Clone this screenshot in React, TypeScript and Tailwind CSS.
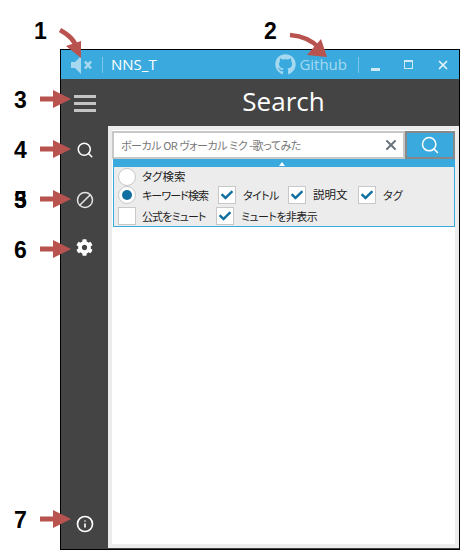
import { Search, Ban, Info, X } from "lucide-react"
import { FaGithub, FaCheck, FaCog } from "react-icons/fa"

const jp = "font-['Noto_Sans_CJK_JP','Noto_Sans',sans-serif] [font-feature-settings:'palt']"
const labelText = "whitespace-nowrap leading-none text-[#222]"

// Red annotation arrow pointing right
function Arrow({ className }: { className: string }) {
  return (
    <svg className={`absolute ${className}`} width="32" height="20" viewBox="0 0 32 20">
      <path d="M0 7.5H13V1L31 10L13 19V12.5H0Z" fill="#b9534f" />
    </svg>
  )
}

function Label({ className, children }: { className: string; children: string }) {
  return (
    <span className={`absolute text-[23px] leading-none font-bold text-black font-['Liberation_Sans',sans-serif] ${className}`}>
      {children}
    </span>
  )
}

function Check({ label, className = "", textClass }: { label: string; className?: string; textClass: string }) {
  return (
    <div className={`flex items-center ${className}`}>
      <div className="flex h-[18px] w-[18px] items-center justify-center border border-[#c8c8c8] bg-white">
        <FaCheck className="h-[12px] w-[12px] text-[#0f6f9f]" />
      </div>
      <span className={`ml-[7px] ${textClass} ${labelText}`}>{label}</span>
    </div>
  )
}

function Radio({ checked = false }: { checked?: boolean }) {
  return (
    <div className="flex h-[18px] w-[18px] items-center justify-center rounded-full border border-[#c8c8c8] bg-white">
      {checked && <div className="h-[10px] w-[10px] rounded-full bg-[#0f6f9f]" />}
    </div>
  )
}

export default function App() {
  return (
    <div className={`relative h-[550px] w-[461px] overflow-hidden bg-white pl-[60px] pt-[49px] ${jp}`}>
      <div className="flex h-[501px] w-[400px] flex-col border border-black bg-[#444444]">
        {/* タイトルバー */}
        <div className="flex h-[29px] shrink-0 items-center bg-[#3aaade] text-white">
          <svg className="ml-[10px] shrink-0" width="21" height="18" viewBox="0 0 21 18">
            <path d="M0 6H4L10 0V18L4 12H0Z" fill="#a6d9f0" />
            <path d="M14 5.5L20 12.5M20 5.5L14 12.5" stroke="#a6d9f0" strokeWidth="2.6" />
          </svg>
          <div className="ml-[10px] h-[16px] w-px bg-[#7cc6e8]" />
          <span className="ml-[8px] text-[15px] leading-none font-['Open_Sans',sans-serif]">NNS_T</span>
          <FaGithub className="ml-auto h-[21px] w-[21px] text-[#a6d9f0]" />
          <span className="ml-[3px] text-[15px] leading-none text-[#a6d9f0] font-['Open_Sans',sans-serif]">Github</span>
          <div className="ml-[11px] h-[16px] w-px bg-[#7cc6e8]" />
          <div className="ml-[12px] mt-[9px] h-[3px] w-[9px] bg-[#cfeaf7]" />
          <div className="ml-[24px] h-[9px] w-[9px] border border-t-2 border-[#cfeaf7]" />
          <X className="ml-[23px] mr-[9px] h-[14px] w-[14px] text-[#e2f3fb]" strokeWidth={3} />
        </div>

        <div className="flex min-h-0 flex-1">
          {/* サイドバー */}
          <div className="flex w-[47px] shrink-0 flex-col items-center pt-[16px] pb-[16px] text-white">
            <div className="flex w-[22px] flex-col gap-[4px]">
              <div className="h-[3px] bg-[#c4c4c4]" />
              <div className="h-[3px] bg-[#c4c4c4]" />
              <div className="h-[3px] bg-[#c4c4c4]" />
            </div>
            <Search className="mt-[29px] h-[18px] w-[18px]" strokeWidth={2} />
            <Ban className="mt-[32px] h-[18px] w-[18px] -scale-x-100 text-[#e4e4e4]" strokeWidth={2} />
            <FaCog className="mt-[30px] h-[17px] w-[17px]" />
            <Info className="mt-auto h-[18px] w-[18px]" strokeWidth={2.2} />
          </div>

          {/* メイン */}
          <div className="flex min-w-0 flex-1 flex-col pb-[1px]">
            <div className="flex h-[47px] shrink-0 items-center justify-center pb-[4px] text-[26px] leading-none text-white font-['Open_Sans',sans-serif]">
              Search
            </div>
            <div className="flex-1 border-[4px] border-[#ececec] bg-white">
              <div className="mt-px flex h-[28px]">
                <div className="flex w-[293px] items-center border-2 border-[#c8c8c8] bg-white pl-[7px] pr-[4px]">
                  <span className="flex-1 whitespace-nowrap text-[11px] leading-none tracking-[-0.45px] text-[#777]">
                    ボーカル OR ヴォーカル ミク -歌ってみた
                  </span>
                  <X className="h-[16px] w-[16px] text-[#66727c]" strokeWidth={3} />
                </div>
                <div className="flex w-[50px] items-center justify-center border-2 border-[#888] bg-[#3aaade]">
                  <Search className="h-[20px] w-[20px] text-white" strokeWidth={1.8} />
                </div>
              </div>
              <div className="ml-px h-[68px] w-[342px] border border-[#3aaade] bg-[#ececec]">
                <div className="relative h-[7px] bg-[#3aaade]">
                  <div className="absolute left-[165px] top-[2px] h-0 w-0 border-x-[3px] border-b-[4px] border-x-transparent border-b-white" />
                </div>
                <div className="flex h-[17px] items-center pl-[4px] pt-[2px]">
                  <Radio />
                  <span className={`ml-[6px] text-[11.5px] ${labelText}`}>タグ検索</span>
                </div>
                <div className="mt-[2px] flex h-[18px] items-center pl-[4px]">
                  <Radio checked />
                  <span className={`ml-[6px] w-[76px] text-[11px] tracking-[-0.9px] ${labelText}`}>キーワード検索</span>
                  <Check label="タイトル" className="w-[70px]" textClass="text-[11px] tracking-[-0.6px]" />
                  <Check label="説明文" className="w-[70px]" textClass="text-[11.5px]" />
                  <Check label="タグ" textClass="text-[11px]" />
                </div>
                <div className="mt-[3px] flex h-[18px] items-center pl-[4px]">
                  <div className="h-[18px] w-[18px] border border-[#c8c8c8] bg-white" />
                  <span className={`ml-[6px] w-[74px] text-[11px] tracking-[-0.9px] ${labelText}`}>公式をミュート</span>
                  <Check label="ミュートを非表示" textClass="text-[11px] tracking-[-0.6px]" />
                </div>
              </div>
            </div>
          </div>
        </div>
      </div>

      {/* 注釈 */}
      <Label className="left-[34px] top-[20px]">1</Label>
      <Label className="left-[264px] top-[20px]">2</Label>
      <Label className="left-[14px] top-[89px]">3</Label>
      <Label className="left-[14px] top-[139px]">4</Label>
      <Label className="left-[14px] top-[189px]">3</Label>
      <Label className="left-[14px] top-[189px]">5</Label>
      <Label className="left-[14px] top-[239px]">6</Label>
      <Label className="left-[14px] top-[509px]">7</Label>
      <svg className="absolute left-[55px] top-[25px]" width="30" height="34" viewBox="0 0 30 34">
        <path d="M5 5C14 10 20 15 22 24" stroke="#b9534f" strokeWidth="4.5" fill="none" />
        <path d="M11 21L26 16L26 33Z" fill="#b9534f" />
      </svg>
      <svg className="absolute left-[288px] top-[30px]" width="44" height="30" viewBox="0 0 44 30">
        <path d="M2 5C14 6 24 10 31 18" stroke="#b9534f" strokeWidth="4.5" fill="none" />
        <path d="M33 9L39 27L19 25Z" fill="#b9534f" />
      </svg>
      <Arrow className="left-[40px] top-[89px]" />
      <Arrow className="left-[40px] top-[139px]" />
      <Arrow className="left-[40px] top-[189px]" />
      <Arrow className="left-[40px] top-[239px]" />
      <Arrow className="left-[40px] top-[509px]" />
    </div>
  )
}
